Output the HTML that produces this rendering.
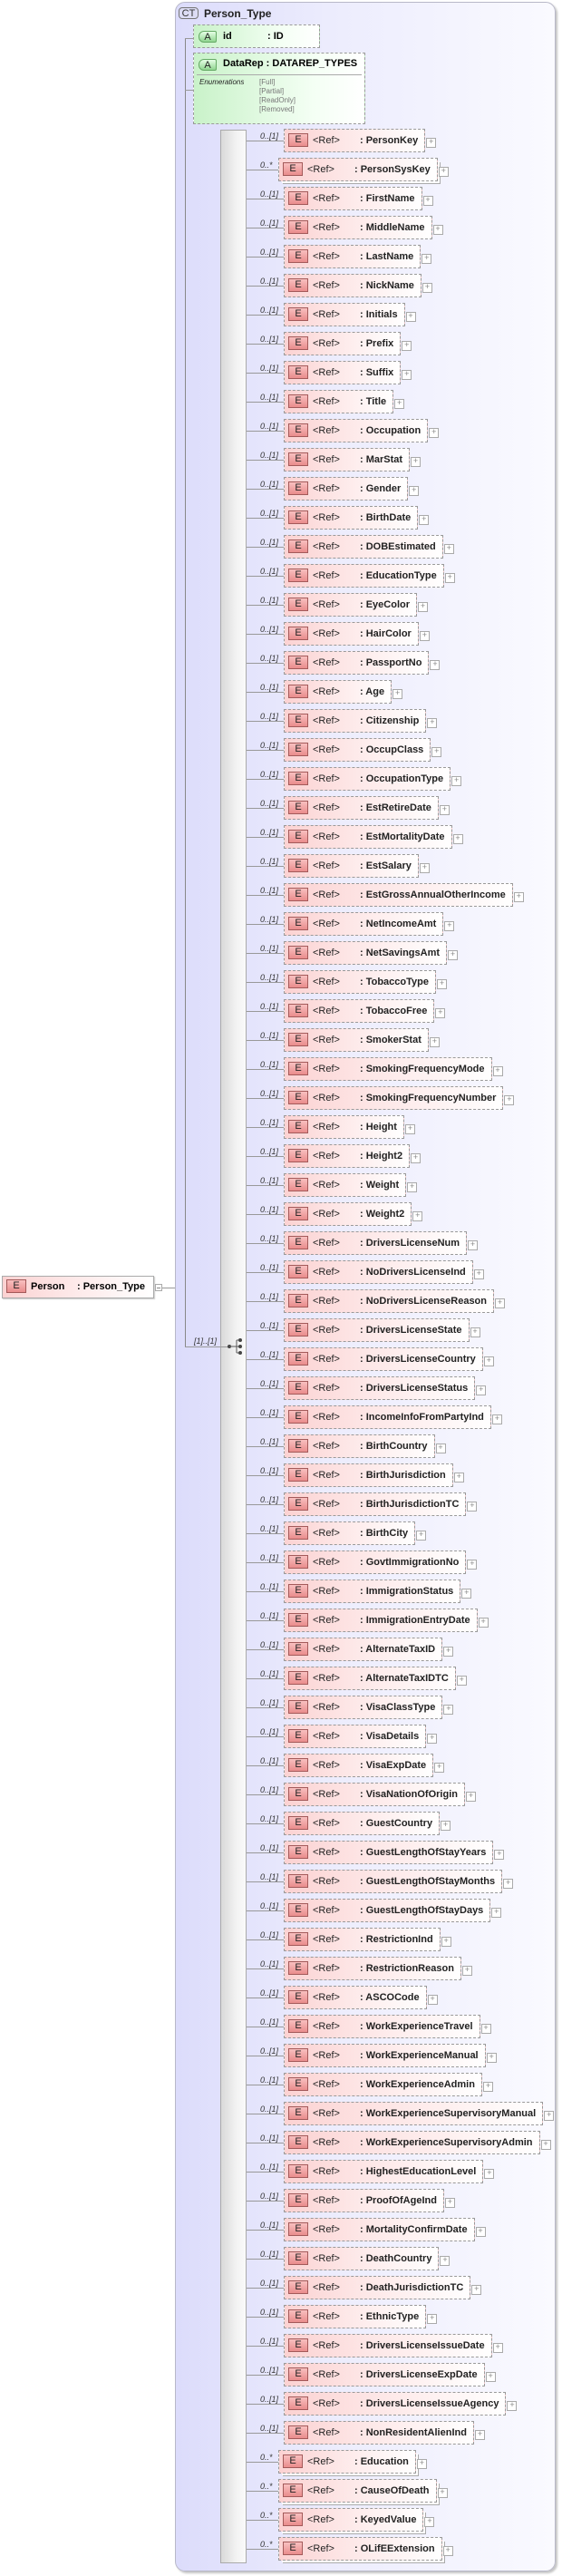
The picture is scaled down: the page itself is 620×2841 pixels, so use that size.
<!DOCTYPE html>
<html><head><meta charset="utf-8">
<style>
*{margin:0;padding:0;box-sizing:border-box}
body{width:620px;height:2841px;background:#fff;position:relative;overflow:hidden;font-family:"Liberation Sans",sans-serif}
.ct{position:absolute;left:193px;top:2px;width:420px;height:2834px;border:1px solid #b8b8c8;border-radius:11px;background:linear-gradient(90deg,#dcdcfb 0%,#ececfd 40%,#fafaff 100%);box-shadow:2px 2px 2px #c4c4c4}
.icon{position:absolute;border:1px solid #888;font:11px "Liberation Sans",sans-serif;text-align:center;line-height:13px;color:#333}
.title{position:absolute;left:225px;top:8px;font:bold 12px "Liberation Sans",sans-serif;color:#222}
.vl{position:absolute;left:204px;top:42px;width:1px;height:1444px;background:#888}
.hl{position:absolute;height:1px;background:#999}
.att{position:absolute;left:213px;border:1px dashed #9a9a9a;background:linear-gradient(90deg,#c9f2c9,#f4fff4 70%,#fff);}
.aicon{position:absolute;left:5px;width:20px;height:13px;border:1px solid #6a6;border-radius:6px 2px 2px 6px;background:linear-gradient(#e6ffe6,#8fd48f);font:11px "Liberation Sans";text-align:center;line-height:12px;color:#222}
.seq{position:absolute;left:243px;top:143px;width:29px;height:2684px;border:1px solid #aaa;background:linear-gradient(90deg,#d9d9d9,#f2f2f2 60%,#fafafa)}
.rows{position:absolute;left:0;top:142px;width:620px}
.r{position:relative;height:32px;width:620px}
.m{position:absolute;left:287px;top:3px;font:italic 9px "Liberation Sans",sans-serif;color:#333}
.l{position:absolute;left:272px;top:13px;width:41px;height:1px;background:#999}
.b{position:absolute;left:313px;top:0;height:26px;border:1px dashed #9a9a9a;background:linear-gradient(90deg,#fcd2d2,#fde6e6 40%,#fff);white-space:nowrap;font:11px "Liberation Sans",sans-serif;line-height:24px;padding-right:7px;color:#222}
.s .b{left:307px;box-shadow:3px 3px 0 -1px #fff,4px 4px 0 -1px #aaa}
.s .l{width:35px}
.b::after{content:"+";position:absolute;right:-13px;top:9px;width:9px;height:9px;border:1px solid #aaa;background:#fff;font:9px/7px "Liberation Sans";color:#888;text-align:center}
.ei{display:inline-block;vertical-align:middle;width:22px;height:15px;margin:0 5px 0 4px;border:1px solid #a35a5a;background:linear-gradient(#f9c0c0,#e98c8c);font:11px/13px "Liberation Sans";text-align:center;color:#222;position:relative;top:-1px}
.rf{display:inline-block;width:52px}
.n{font-weight:bold}
</style></head><body>

<div style="position:absolute;left:2px;top:1407px;width:168px;height:25px;border:1px solid #aaa;background:linear-gradient(90deg,#fcd2d2,#fde6e6 40%,#fff);box-shadow:1px 1px 1px #ccc;font:bold 11px 'Liberation Sans';line-height:23px;white-space:nowrap">
<span class="ei" style="margin-left:4px;font-weight:normal">E</span>Person<span style="position:absolute;left:82px">: Person_Type</span></div>
<div style="position:absolute;left:171px;top:1416px;width:8px;height:8px;border:1px solid #aaa;background:#fff"></div>
<div style="position:absolute;left:173px;top:1420px;width:4px;height:1px;background:#888"></div>
<div class="hl" style="left:179px;top:1420px;width:25px"></div>

<div class="ct"></div>
<div class="icon" style="left:197px;top:8px;width:22px;height:13px;border-radius:4px;background:#dcdcf4;border-color:#777">CT</div>
<div class="title">Person_Type</div>
<div class="vl"></div>
<div class="hl" style="left:204px;top:42px;width:10px"></div>
<div class="hl" style="left:204px;top:99px;width:10px"></div>

<div class="att" style="top:27px;width:140px;height:26px;font:bold 11px 'Liberation Sans';line-height:24px">
<div class="aicon" style="top:6px;font-weight:normal">A</div>
<span style="position:absolute;left:32px">id</span><span style="position:absolute;left:81px">: ID</span></div>

<div class="att" style="top:58px;width:190px;height:79px">
<div class="aicon" style="top:6px">A</div>
<div style="position:absolute;left:32px;top:5px;font:bold 11px 'Liberation Sans';white-space:nowrap">DataRep : DATAREP_TYPES</div>
<div style="position:absolute;left:3px;right:3px;top:23px;height:1px;background:#aaa"></div>
<div style="position:absolute;left:6px;top:27px;font:italic 8px 'Liberation Sans';color:#222">Enumerations</div>
<div style="position:absolute;left:72px;top:27px;font:8px/10px 'Liberation Sans';color:#777">[Full]<br>[Partial]<br>[ReadOnly]<br>[Removed]</div>
</div>

<div class="seq"></div>
<div class="hl" style="left:204px;top:1485px;width:49px"></div>
<div style="position:absolute;left:214px;top:1474px;font:italic 9px 'Liberation Sans';color:#333">[1]..[1]</div>
<svg style="position:absolute;left:248px;top:1474px" width="22" height="22" viewBox="0 0 22 22">
<circle cx="5" cy="11" r="2" fill="#444"/>
<path d="M5 11H13M13 4V18M13 4H17M13 11H17M13 18H17" stroke="#555" stroke-width="1" fill="none"/>
<circle cx="17" cy="4" r="2" fill="#444"/><circle cx="17" cy="11" r="2" fill="#444"/><circle cx="17" cy="18" r="2" fill="#444"/>
</svg>

<div class="rows">
<div class="r"><span class="m">0..[1]</span><i class="l"></i><div class="b"><span class="ei">E</span><span class="rf">&lt;Ref&gt;</span><span class="n">: PersonKey</span></div></div>
<div class="r s"><span class="m">0..*</span><i class="l"></i><div class="b"><span class="ei">E</span><span class="rf">&lt;Ref&gt;</span><span class="n">: PersonSysKey</span></div></div>
<div class="r"><span class="m">0..[1]</span><i class="l"></i><div class="b"><span class="ei">E</span><span class="rf">&lt;Ref&gt;</span><span class="n">: FirstName</span></div></div>
<div class="r"><span class="m">0..[1]</span><i class="l"></i><div class="b"><span class="ei">E</span><span class="rf">&lt;Ref&gt;</span><span class="n">: MiddleName</span></div></div>
<div class="r"><span class="m">0..[1]</span><i class="l"></i><div class="b"><span class="ei">E</span><span class="rf">&lt;Ref&gt;</span><span class="n">: LastName</span></div></div>
<div class="r"><span class="m">0..[1]</span><i class="l"></i><div class="b"><span class="ei">E</span><span class="rf">&lt;Ref&gt;</span><span class="n">: NickName</span></div></div>
<div class="r"><span class="m">0..[1]</span><i class="l"></i><div class="b"><span class="ei">E</span><span class="rf">&lt;Ref&gt;</span><span class="n">: Initials</span></div></div>
<div class="r"><span class="m">0..[1]</span><i class="l"></i><div class="b"><span class="ei">E</span><span class="rf">&lt;Ref&gt;</span><span class="n">: Prefix</span></div></div>
<div class="r"><span class="m">0..[1]</span><i class="l"></i><div class="b"><span class="ei">E</span><span class="rf">&lt;Ref&gt;</span><span class="n">: Suffix</span></div></div>
<div class="r"><span class="m">0..[1]</span><i class="l"></i><div class="b"><span class="ei">E</span><span class="rf">&lt;Ref&gt;</span><span class="n">: Title</span></div></div>
<div class="r"><span class="m">0..[1]</span><i class="l"></i><div class="b"><span class="ei">E</span><span class="rf">&lt;Ref&gt;</span><span class="n">: Occupation</span></div></div>
<div class="r"><span class="m">0..[1]</span><i class="l"></i><div class="b"><span class="ei">E</span><span class="rf">&lt;Ref&gt;</span><span class="n">: MarStat</span></div></div>
<div class="r"><span class="m">0..[1]</span><i class="l"></i><div class="b"><span class="ei">E</span><span class="rf">&lt;Ref&gt;</span><span class="n">: Gender</span></div></div>
<div class="r"><span class="m">0..[1]</span><i class="l"></i><div class="b"><span class="ei">E</span><span class="rf">&lt;Ref&gt;</span><span class="n">: BirthDate</span></div></div>
<div class="r"><span class="m">0..[1]</span><i class="l"></i><div class="b"><span class="ei">E</span><span class="rf">&lt;Ref&gt;</span><span class="n">: DOBEstimated</span></div></div>
<div class="r"><span class="m">0..[1]</span><i class="l"></i><div class="b"><span class="ei">E</span><span class="rf">&lt;Ref&gt;</span><span class="n">: EducationType</span></div></div>
<div class="r"><span class="m">0..[1]</span><i class="l"></i><div class="b"><span class="ei">E</span><span class="rf">&lt;Ref&gt;</span><span class="n">: EyeColor</span></div></div>
<div class="r"><span class="m">0..[1]</span><i class="l"></i><div class="b"><span class="ei">E</span><span class="rf">&lt;Ref&gt;</span><span class="n">: HairColor</span></div></div>
<div class="r"><span class="m">0..[1]</span><i class="l"></i><div class="b"><span class="ei">E</span><span class="rf">&lt;Ref&gt;</span><span class="n">: PassportNo</span></div></div>
<div class="r"><span class="m">0..[1]</span><i class="l"></i><div class="b"><span class="ei">E</span><span class="rf">&lt;Ref&gt;</span><span class="n">: Age</span></div></div>
<div class="r"><span class="m">0..[1]</span><i class="l"></i><div class="b"><span class="ei">E</span><span class="rf">&lt;Ref&gt;</span><span class="n">: Citizenship</span></div></div>
<div class="r"><span class="m">0..[1]</span><i class="l"></i><div class="b"><span class="ei">E</span><span class="rf">&lt;Ref&gt;</span><span class="n">: OccupClass</span></div></div>
<div class="r"><span class="m">0..[1]</span><i class="l"></i><div class="b"><span class="ei">E</span><span class="rf">&lt;Ref&gt;</span><span class="n">: OccupationType</span></div></div>
<div class="r"><span class="m">0..[1]</span><i class="l"></i><div class="b"><span class="ei">E</span><span class="rf">&lt;Ref&gt;</span><span class="n">: EstRetireDate</span></div></div>
<div class="r"><span class="m">0..[1]</span><i class="l"></i><div class="b"><span class="ei">E</span><span class="rf">&lt;Ref&gt;</span><span class="n">: EstMortalityDate</span></div></div>
<div class="r"><span class="m">0..[1]</span><i class="l"></i><div class="b"><span class="ei">E</span><span class="rf">&lt;Ref&gt;</span><span class="n">: EstSalary</span></div></div>
<div class="r"><span class="m">0..[1]</span><i class="l"></i><div class="b"><span class="ei">E</span><span class="rf">&lt;Ref&gt;</span><span class="n">: EstGrossAnnualOtherIncome</span></div></div>
<div class="r"><span class="m">0..[1]</span><i class="l"></i><div class="b"><span class="ei">E</span><span class="rf">&lt;Ref&gt;</span><span class="n">: NetIncomeAmt</span></div></div>
<div class="r"><span class="m">0..[1]</span><i class="l"></i><div class="b"><span class="ei">E</span><span class="rf">&lt;Ref&gt;</span><span class="n">: NetSavingsAmt</span></div></div>
<div class="r"><span class="m">0..[1]</span><i class="l"></i><div class="b"><span class="ei">E</span><span class="rf">&lt;Ref&gt;</span><span class="n">: TobaccoType</span></div></div>
<div class="r"><span class="m">0..[1]</span><i class="l"></i><div class="b"><span class="ei">E</span><span class="rf">&lt;Ref&gt;</span><span class="n">: TobaccoFree</span></div></div>
<div class="r"><span class="m">0..[1]</span><i class="l"></i><div class="b"><span class="ei">E</span><span class="rf">&lt;Ref&gt;</span><span class="n">: SmokerStat</span></div></div>
<div class="r"><span class="m">0..[1]</span><i class="l"></i><div class="b"><span class="ei">E</span><span class="rf">&lt;Ref&gt;</span><span class="n">: SmokingFrequencyMode</span></div></div>
<div class="r"><span class="m">0..[1]</span><i class="l"></i><div class="b"><span class="ei">E</span><span class="rf">&lt;Ref&gt;</span><span class="n">: SmokingFrequencyNumber</span></div></div>
<div class="r"><span class="m">0..[1]</span><i class="l"></i><div class="b"><span class="ei">E</span><span class="rf">&lt;Ref&gt;</span><span class="n">: Height</span></div></div>
<div class="r"><span class="m">0..[1]</span><i class="l"></i><div class="b"><span class="ei">E</span><span class="rf">&lt;Ref&gt;</span><span class="n">: Height2</span></div></div>
<div class="r"><span class="m">0..[1]</span><i class="l"></i><div class="b"><span class="ei">E</span><span class="rf">&lt;Ref&gt;</span><span class="n">: Weight</span></div></div>
<div class="r"><span class="m">0..[1]</span><i class="l"></i><div class="b"><span class="ei">E</span><span class="rf">&lt;Ref&gt;</span><span class="n">: Weight2</span></div></div>
<div class="r"><span class="m">0..[1]</span><i class="l"></i><div class="b"><span class="ei">E</span><span class="rf">&lt;Ref&gt;</span><span class="n">: DriversLicenseNum</span></div></div>
<div class="r"><span class="m">0..[1]</span><i class="l"></i><div class="b"><span class="ei">E</span><span class="rf">&lt;Ref&gt;</span><span class="n">: NoDriversLicenseInd</span></div></div>
<div class="r"><span class="m">0..[1]</span><i class="l"></i><div class="b"><span class="ei">E</span><span class="rf">&lt;Ref&gt;</span><span class="n">: NoDriversLicenseReason</span></div></div>
<div class="r"><span class="m">0..[1]</span><i class="l"></i><div class="b"><span class="ei">E</span><span class="rf">&lt;Ref&gt;</span><span class="n">: DriversLicenseState</span></div></div>
<div class="r"><span class="m">0..[1]</span><i class="l"></i><div class="b"><span class="ei">E</span><span class="rf">&lt;Ref&gt;</span><span class="n">: DriversLicenseCountry</span></div></div>
<div class="r"><span class="m">0..[1]</span><i class="l"></i><div class="b"><span class="ei">E</span><span class="rf">&lt;Ref&gt;</span><span class="n">: DriversLicenseStatus</span></div></div>
<div class="r"><span class="m">0..[1]</span><i class="l"></i><div class="b"><span class="ei">E</span><span class="rf">&lt;Ref&gt;</span><span class="n">: IncomeInfoFromPartyInd</span></div></div>
<div class="r"><span class="m">0..[1]</span><i class="l"></i><div class="b"><span class="ei">E</span><span class="rf">&lt;Ref&gt;</span><span class="n">: BirthCountry</span></div></div>
<div class="r"><span class="m">0..[1]</span><i class="l"></i><div class="b"><span class="ei">E</span><span class="rf">&lt;Ref&gt;</span><span class="n">: BirthJurisdiction</span></div></div>
<div class="r"><span class="m">0..[1]</span><i class="l"></i><div class="b"><span class="ei">E</span><span class="rf">&lt;Ref&gt;</span><span class="n">: BirthJurisdictionTC</span></div></div>
<div class="r"><span class="m">0..[1]</span><i class="l"></i><div class="b"><span class="ei">E</span><span class="rf">&lt;Ref&gt;</span><span class="n">: BirthCity</span></div></div>
<div class="r"><span class="m">0..[1]</span><i class="l"></i><div class="b"><span class="ei">E</span><span class="rf">&lt;Ref&gt;</span><span class="n">: GovtImmigrationNo</span></div></div>
<div class="r"><span class="m">0..[1]</span><i class="l"></i><div class="b"><span class="ei">E</span><span class="rf">&lt;Ref&gt;</span><span class="n">: ImmigrationStatus</span></div></div>
<div class="r"><span class="m">0..[1]</span><i class="l"></i><div class="b"><span class="ei">E</span><span class="rf">&lt;Ref&gt;</span><span class="n">: ImmigrationEntryDate</span></div></div>
<div class="r"><span class="m">0..[1]</span><i class="l"></i><div class="b"><span class="ei">E</span><span class="rf">&lt;Ref&gt;</span><span class="n">: AlternateTaxID</span></div></div>
<div class="r"><span class="m">0..[1]</span><i class="l"></i><div class="b"><span class="ei">E</span><span class="rf">&lt;Ref&gt;</span><span class="n">: AlternateTaxIDTC</span></div></div>
<div class="r"><span class="m">0..[1]</span><i class="l"></i><div class="b"><span class="ei">E</span><span class="rf">&lt;Ref&gt;</span><span class="n">: VisaClassType</span></div></div>
<div class="r"><span class="m">0..[1]</span><i class="l"></i><div class="b"><span class="ei">E</span><span class="rf">&lt;Ref&gt;</span><span class="n">: VisaDetails</span></div></div>
<div class="r"><span class="m">0..[1]</span><i class="l"></i><div class="b"><span class="ei">E</span><span class="rf">&lt;Ref&gt;</span><span class="n">: VisaExpDate</span></div></div>
<div class="r"><span class="m">0..[1]</span><i class="l"></i><div class="b"><span class="ei">E</span><span class="rf">&lt;Ref&gt;</span><span class="n">: VisaNationOfOrigin</span></div></div>
<div class="r"><span class="m">0..[1]</span><i class="l"></i><div class="b"><span class="ei">E</span><span class="rf">&lt;Ref&gt;</span><span class="n">: GuestCountry</span></div></div>
<div class="r"><span class="m">0..[1]</span><i class="l"></i><div class="b"><span class="ei">E</span><span class="rf">&lt;Ref&gt;</span><span class="n">: GuestLengthOfStayYears</span></div></div>
<div class="r"><span class="m">0..[1]</span><i class="l"></i><div class="b"><span class="ei">E</span><span class="rf">&lt;Ref&gt;</span><span class="n">: GuestLengthOfStayMonths</span></div></div>
<div class="r"><span class="m">0..[1]</span><i class="l"></i><div class="b"><span class="ei">E</span><span class="rf">&lt;Ref&gt;</span><span class="n">: GuestLengthOfStayDays</span></div></div>
<div class="r"><span class="m">0..[1]</span><i class="l"></i><div class="b"><span class="ei">E</span><span class="rf">&lt;Ref&gt;</span><span class="n">: RestrictionInd</span></div></div>
<div class="r"><span class="m">0..[1]</span><i class="l"></i><div class="b"><span class="ei">E</span><span class="rf">&lt;Ref&gt;</span><span class="n">: RestrictionReason</span></div></div>
<div class="r"><span class="m">0..[1]</span><i class="l"></i><div class="b"><span class="ei">E</span><span class="rf">&lt;Ref&gt;</span><span class="n">: ASCOCode</span></div></div>
<div class="r"><span class="m">0..[1]</span><i class="l"></i><div class="b"><span class="ei">E</span><span class="rf">&lt;Ref&gt;</span><span class="n">: WorkExperienceTravel</span></div></div>
<div class="r"><span class="m">0..[1]</span><i class="l"></i><div class="b"><span class="ei">E</span><span class="rf">&lt;Ref&gt;</span><span class="n">: WorkExperienceManual</span></div></div>
<div class="r"><span class="m">0..[1]</span><i class="l"></i><div class="b"><span class="ei">E</span><span class="rf">&lt;Ref&gt;</span><span class="n">: WorkExperienceAdmin</span></div></div>
<div class="r"><span class="m">0..[1]</span><i class="l"></i><div class="b"><span class="ei">E</span><span class="rf">&lt;Ref&gt;</span><span class="n">: WorkExperienceSupervisoryManual</span></div></div>
<div class="r"><span class="m">0..[1]</span><i class="l"></i><div class="b"><span class="ei">E</span><span class="rf">&lt;Ref&gt;</span><span class="n">: WorkExperienceSupervisoryAdmin</span></div></div>
<div class="r"><span class="m">0..[1]</span><i class="l"></i><div class="b"><span class="ei">E</span><span class="rf">&lt;Ref&gt;</span><span class="n">: HighestEducationLevel</span></div></div>
<div class="r"><span class="m">0..[1]</span><i class="l"></i><div class="b"><span class="ei">E</span><span class="rf">&lt;Ref&gt;</span><span class="n">: ProofOfAgeInd</span></div></div>
<div class="r"><span class="m">0..[1]</span><i class="l"></i><div class="b"><span class="ei">E</span><span class="rf">&lt;Ref&gt;</span><span class="n">: MortalityConfirmDate</span></div></div>
<div class="r"><span class="m">0..[1]</span><i class="l"></i><div class="b"><span class="ei">E</span><span class="rf">&lt;Ref&gt;</span><span class="n">: DeathCountry</span></div></div>
<div class="r"><span class="m">0..[1]</span><i class="l"></i><div class="b"><span class="ei">E</span><span class="rf">&lt;Ref&gt;</span><span class="n">: DeathJurisdictionTC</span></div></div>
<div class="r"><span class="m">0..[1]</span><i class="l"></i><div class="b"><span class="ei">E</span><span class="rf">&lt;Ref&gt;</span><span class="n">: EthnicType</span></div></div>
<div class="r"><span class="m">0..[1]</span><i class="l"></i><div class="b"><span class="ei">E</span><span class="rf">&lt;Ref&gt;</span><span class="n">: DriversLicenseIssueDate</span></div></div>
<div class="r"><span class="m">0..[1]</span><i class="l"></i><div class="b"><span class="ei">E</span><span class="rf">&lt;Ref&gt;</span><span class="n">: DriversLicenseExpDate</span></div></div>
<div class="r"><span class="m">0..[1]</span><i class="l"></i><div class="b"><span class="ei">E</span><span class="rf">&lt;Ref&gt;</span><span class="n">: DriversLicenseIssueAgency</span></div></div>
<div class="r"><span class="m">0..[1]</span><i class="l"></i><div class="b"><span class="ei">E</span><span class="rf">&lt;Ref&gt;</span><span class="n">: NonResidentAlienInd</span></div></div>
<div class="r s"><span class="m">0..*</span><i class="l"></i><div class="b"><span class="ei">E</span><span class="rf">&lt;Ref&gt;</span><span class="n">: Education</span></div></div>
<div class="r s"><span class="m">0..*</span><i class="l"></i><div class="b"><span class="ei">E</span><span class="rf">&lt;Ref&gt;</span><span class="n">: CauseOfDeath</span></div></div>
<div class="r s"><span class="m">0..*</span><i class="l"></i><div class="b"><span class="ei">E</span><span class="rf">&lt;Ref&gt;</span><span class="n">: KeyedValue</span></div></div>
<div class="r s"><span class="m">0..*</span><i class="l"></i><div class="b"><span class="ei">E</span><span class="rf">&lt;Ref&gt;</span><span class="n">: OLifEExtension</span></div></div>
</div>
</body></html>
